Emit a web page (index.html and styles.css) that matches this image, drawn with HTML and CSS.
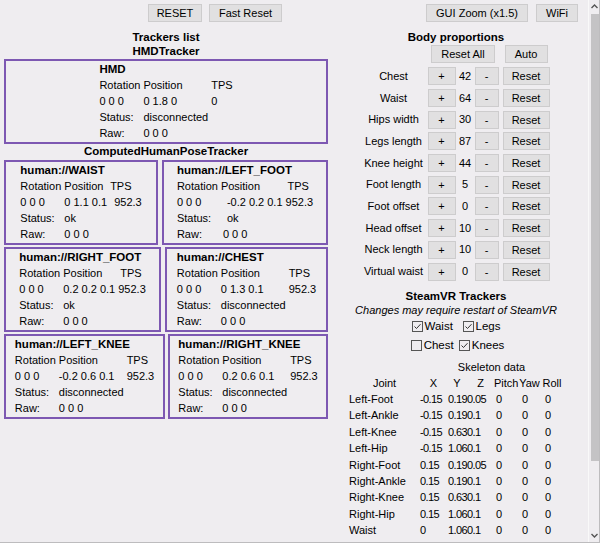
FILE: index.html
```html
<!DOCTYPE html>
<html lang="en">
<head>
<meta charset="utf-8">
<title>SlimeVR Server</title>
<link rel="stylesheet" href="styles.css">
</head>
<body>
<div class="app">
  <div class="content">
    <header class="topbar">
      <button class="btn btn-reset">RESET</button>
      <button class="btn btn-fast">Fast Reset</button>
      <button class="btn btn-zoom">GUI Zoom (x1.5)</button>
      <button class="btn btn-wifi">WiFi</button>
    </header>
    <div class="main">
      <section class="left">
        <h2 class="heading">Trackers list</h2>
        <h2 class="heading">HMDTracker</h2>
        <div class="tracker tracker-hmd">
          <div class="tgrid">
            <div class="ttitle">HMD</div>
            <span>Rotation</span><span>Position</span><span>TPS</span>
            <span>0 0 0</span><span>0 1.8 0</span><span>0</span>
            <span>Status:</span><span>disconnected</span><span></span>
            <span>Raw:</span><span>0 0 0</span><span></span>
          </div>
        </div>
        <h2 class="heading">ComputedHumanPoseTracker</h2>
        <div class="trow trow-a">
          <div class="tracker">
            <div class="tgrid">
              <div class="ttitle">human://WAIST</div>
              <span>Rotation</span><span>Position</span><span>TPS</span>
              <span>0 0 0</span><span>0 1.1 0.1</span><span class="tps">952.3</span>
              <span>Status:</span><span>ok</span><span></span>
              <span>Raw:</span><span>0 0 0</span><span></span>
            </div>
          </div>
          <div class="tracker">
            <div class="tgrid">
              <div class="ttitle">human://LEFT_FOOT</div>
              <span>Rotation</span><span>Position</span><span class="tps-h">TPS</span>
              <span>0 0 0</span><span class="shift">-0.2 0.2 0.1</span><span>952.3</span>
              <span>Status:</span><span class="shift">ok</span><span></span>
              <span>Raw:</span><span class="shift-s">0 0 0</span><span></span>
            </div>
          </div>
        </div>
        <div class="trow trow-b">
          <div class="tracker">
            <div class="tgrid">
              <div class="ttitle">human://RIGHT_FOOT</div>
              <span>Rotation</span><span>Position</span><span class="tps-h">TPS</span>
              <span>0 0 0</span><span>0.2 0.2 0.1</span><span>952.3</span>
              <span>Status:</span><span>ok</span><span></span>
              <span>Raw:</span><span>0 0 0</span><span></span>
            </div>
          </div>
          <div class="tracker">
            <div class="tgrid">
              <div class="ttitle">human://CHEST</div>
              <span>Rotation</span><span>Position</span><span>TPS</span>
              <span>0 0 0</span><span>0 1.3 0.1</span><span>952.3</span>
              <span>Status:</span><span>disconnected</span><span></span>
              <span>Raw:</span><span>0 0 0</span><span></span>
            </div>
          </div>
        </div>
        <div class="trow trow-c">
          <div class="tracker">
            <div class="tgrid">
              <div class="ttitle">human://LEFT_KNEE</div>
              <span>Rotation</span><span>Position</span><span>TPS</span>
              <span>0 0 0</span><span>-0.2 0.6 0.1</span><span>952.3</span>
              <span>Status:</span><span>disconnected</span><span></span>
              <span>Raw:</span><span>0 0 0</span><span></span>
            </div>
          </div>
          <div class="tracker">
            <div class="tgrid">
              <div class="ttitle">human://RIGHT_KNEE</div>
              <span>Rotation</span><span>Position</span><span>TPS</span>
              <span>0 0 0</span><span>0.2 0.6 0.1</span><span>952.3</span>
              <span>Status:</span><span>disconnected</span><span></span>
              <span>Raw:</span><span>0 0 0</span><span></span>
            </div>
          </div>
        </div>
      </section>

      <section class="right">
        <div class="props">
          <h2 class="heading props-title">Body proportions</h2>
          <button class="btn btn-resetall">Reset All</button>
          <button class="btn btn-auto">Auto</button>

          <span class="plabel">Chest</span><button class="btn btn-plus">+</button><span class="pval">42</span><button class="btn btn-minus">-</button><button class="btn btn-preset">Reset</button>
          <span class="plabel">Waist</span><button class="btn btn-plus">+</button><span class="pval">64</span><button class="btn btn-minus">-</button><button class="btn btn-preset">Reset</button>
          <span class="plabel">Hips width</span><button class="btn btn-plus">+</button><span class="pval">30</span><button class="btn btn-minus">-</button><button class="btn btn-preset">Reset</button>
          <span class="plabel">Legs length</span><button class="btn btn-plus">+</button><span class="pval">87</span><button class="btn btn-minus">-</button><button class="btn btn-preset">Reset</button>
          <span class="plabel">Knee height</span><button class="btn btn-plus">+</button><span class="pval">44</span><button class="btn btn-minus">-</button><button class="btn btn-preset">Reset</button>
          <span class="plabel">Foot length</span><button class="btn btn-plus">+</button><span class="pval">5</span><button class="btn btn-minus">-</button><button class="btn btn-preset">Reset</button>
          <span class="plabel">Foot offset</span><button class="btn btn-plus">+</button><span class="pval">0</span><button class="btn btn-minus">-</button><button class="btn btn-preset">Reset</button>
          <span class="plabel">Head offset</span><button class="btn btn-plus">+</button><span class="pval">10</span><button class="btn btn-minus">-</button><button class="btn btn-preset">Reset</button>
          <span class="plabel">Neck length</span><button class="btn btn-plus">+</button><span class="pval">10</span><button class="btn btn-minus">-</button><button class="btn btn-preset">Reset</button>
          <span class="plabel">Virtual waist</span><button class="btn btn-plus">+</button><span class="pval">0</span><button class="btn btn-minus">-</button><button class="btn btn-preset">Reset</button>
        </div>

        <h2 class="heading steam-title">SteamVR Trackers</h2>
        <p class="note">Changes may require restart of SteamVR</p>
        <div class="checks">
          <label class="check"><svg class="cb" width="11" height="11" viewBox="0 0 11 11"><rect x="0.5" y="0.5" width="10" height="10" fill="none" stroke="#555"/><path d="M2.5 5.5 L4.5 7.5 L8.5 3.2" fill="none" stroke="#333" stroke-width="1"/></svg>Waist</label>
          <label class="check"><svg class="cb" width="11" height="11" viewBox="0 0 11 11"><rect x="0.5" y="0.5" width="10" height="10" fill="none" stroke="#555"/><path d="M2.5 5.5 L4.5 7.5 L8.5 3.2" fill="none" stroke="#333" stroke-width="1"/></svg>Legs</label>
          <label class="check"><svg class="cb" width="11" height="11" viewBox="0 0 11 11"><rect x="0.5" y="0.5" width="10" height="10" fill="none" stroke="#555"/></svg>Chest</label>
          <label class="check"><svg class="cb" width="11" height="11" viewBox="0 0 11 11"><rect x="0.5" y="0.5" width="10" height="10" fill="none" stroke="#555"/><path d="M2.5 5.5 L4.5 7.5 L8.5 3.2" fill="none" stroke="#333" stroke-width="1"/></svg>Knees</label>
        </div>

        <div class="skeleton">
          <div class="sk-title">Skeleton data</div>
          <span class="sh">Joint</span><span class="sh">X</span><span class="sh">Y</span><span class="sh">Z</span><span class="sh">Pitch</span><span class="sh">Yaw</span><span class="sh">Roll</span>

          <span>Left-Foot</span><span class="n">-0.15</span><span class="n ny">0.19</span><span class="n">0.05</span><span class="n np">0</span><span class="n nr">0</span><span class="n nr">0</span>
          <span>Left-Ankle</span><span class="n">-0.15</span><span class="n ny">0.19</span><span class="n">0.1</span><span class="n np">0</span><span class="n nr">0</span><span class="n nr">0</span>
          <span>Left-Knee</span><span class="n">-0.15</span><span class="n ny">0.63</span><span class="n">0.1</span><span class="n np">0</span><span class="n nr">0</span><span class="n nr">0</span>
          <span>Left-Hip</span><span class="n">-0.15</span><span class="n ny">1.06</span><span class="n">0.1</span><span class="n np">0</span><span class="n nr">0</span><span class="n nr">0</span>
          <span>Right-Foot</span><span class="n">0.15</span><span class="n ny">0.19</span><span class="n">0.05</span><span class="n np">0</span><span class="n nr">0</span><span class="n nr">0</span>
          <span>Right-Ankle</span><span class="n">0.15</span><span class="n ny">0.19</span><span class="n">0.1</span><span class="n np">0</span><span class="n nr">0</span><span class="n nr">0</span>
          <span>Right-Knee</span><span class="n">0.15</span><span class="n ny">0.63</span><span class="n">0.1</span><span class="n np">0</span><span class="n nr">0</span><span class="n nr">0</span>
          <span>Right-Hip</span><span class="n">0.15</span><span class="n ny">1.06</span><span class="n">0.1</span><span class="n np">0</span><span class="n nr">0</span><span class="n nr">0</span>
          <span>Waist</span><span class="n">0</span><span class="n ny">1.06</span><span class="n">0.1</span><span class="n np">0</span><span class="n nr">0</span><span class="n nr">0</span>
        </div>
      </section>
    </div>
  </div>

  <div class="scrollbar">
    <svg class="arrow" width="11" height="12" viewBox="0 0 11 12"><path d="M2.5 8 L5.5 5 L8.5 8" fill="none" stroke="#555" stroke-width="1.4"/></svg>
    <div class="thumb"></div>
    <div class="track-rest"></div>
    <svg class="arrow" width="11" height="12" viewBox="0 0 11 12"><path d="M2.5 4 L5.5 7 L8.5 4" fill="none" stroke="#555" stroke-width="1.4"/></svg>
  </div>
</div>
</body>
</html>
```

FILE: styles.css
```css
html, body {
  margin: 0;
  padding: 0;
}

body {
  background: #efedf0;
  font-family: "Liberation Sans", Arial, sans-serif;
  font-size: 11px;
  line-height: 1;
  color: #000;
}

.app {
  display: flex;
  width: 600px;
  height: 543px;
  box-sizing: border-box;
  border-right: 1px solid #bdbcbe;
  border-bottom: 1px solid #bdbcbe;
  overflow: hidden;
}

.content {
  flex: none;
  width: 588px;
}

/* ---------- buttons ---------- */
.btn {
  font-family: inherit;
  font-size: 11px;
  color: #000;
  height: 18px;
  padding: 0;
  margin: 0;
  background: #e1e0e1;
  border: 1px solid #cdcccd;
  border-radius: 0;
  box-sizing: border-box;
  line-height: 16px;
  text-align: center;
}

/* ---------- top bar ---------- */
.topbar {
  display: flex;
  align-items: flex-start;
  height: 30px;
  box-sizing: border-box;
  padding: 4px 0 0 148px;
}

.btn-reset { width: 54px; }
.btn-fast { width: 73px; margin-left: 7px; }
.btn-zoom { width: 102px; margin-left: 144px; }
.btn-wifi { width: 42px; margin-left: 8px; }

/* ---------- layout ---------- */
.main {
  display: flex;
  align-items: flex-start;
}

.left {
  flex: none;
  width: 324px;
  margin-left: 4px;
}

.right {
  flex: none;
  width: 256px;
}

.heading {
  margin: 0;
  font-size: 11.5px;
  font-weight: bold;
  line-height: 14px;
  text-align: center;
}

/* ---------- trackers ---------- */
.tracker {
  display: flex;
  justify-content: center;
  border: 2px solid #7d58b2;
  padding-bottom: 1px;
  line-height: 16px;
}

.tracker-hmd {
  margin-top: 1px;
}

.tgrid {
  display: grid;
  grid-template-columns: auto auto auto;
  column-gap: 3px;
  justify-content: start;
  white-space: nowrap;
}

.ttitle {
  grid-column: 1 / -1;
  font-weight: bold;
  font-size: 11.5px;
}

.tps { padding-left: 4px; }
.shift { padding-left: 6px; }
.shift-s { padding-left: 2px; }
.tps-h { padding-left: 2px; }

.trow {
  display: grid;
  margin-top: 2px;
}

.trow-a { grid-template-columns: 154px 166px; column-gap: 4px; }
.trow-b { grid-template-columns: 157px 163px; column-gap: 4px; }
.trow-c { grid-template-columns: 161px 160px; column-gap: 3px; }

/* ---------- body proportions ---------- */
.props {
  display: grid;
  grid-template-columns: 65px 28px 19px 24px 51px;
  grid-template-rows: 15px 20.5px;
  grid-auto-rows: 21.7px;
  justify-content: center;
  align-items: center;
}

.props-title {
  grid-column: 1 / -1;
  align-self: start;
}

.btn-resetall {
  grid-column: 2 / 5;
  justify-self: center;
  align-self: start;
  width: 64px;
}

.btn-auto {
  grid-column: 5;
  justify-self: end;
  align-self: start;
  width: 43px;
  margin-right: 2px;
}

.plabel {
  text-align: center;
  padding-right: 3px;
  white-space: nowrap;
}

.btn-plus { width: 28px; }
.pval { text-align: center; }
.btn-minus { width: 24px; }
.btn-preset { width: 47px; justify-self: end; }

/* ---------- steamvr ---------- */
.steam-title {
  margin-top: 6.5px;
}

.note {
  margin: 0;
  font-style: italic;
  line-height: 14px;
  text-align: center;
  white-space: nowrap;
}

.checks {
  display: grid;
  grid-template-columns: auto auto;
  grid-auto-rows: 19px;
  column-gap: 5px;
  justify-content: center;
  justify-items: center;
  align-items: center;
  padding-left: 3px;
}

.check {
  display: flex;
  align-items: center;
  gap: 2px;
  font-size: 11.5px;
}

.cb {
  display: block;
}

/* ---------- skeleton ---------- */
.skeleton {
  display: grid;
  grid-template-columns: 71px 27px 20px 27px 24px 23px 22px;
  grid-template-rows: 14px;
  grid-auto-rows: 16.4px;
  justify-content: center;
  align-items: center;
  margin-top: 6px;
  white-space: nowrap;
}

.sk-title {
  grid-column: 2 / -1;
  text-align: center;
}

.sh {
  text-align: center;
}

.n { letter-spacing: -0.6px; }
.ny { padding-left: 1px; }
.np { padding-left: 2px; }
.nr { padding-left: 4px; }

/* ---------- scrollbar ---------- */
.scrollbar {
  flex: none;
  width: 11px;
  display: flex;
  flex-direction: column;
  align-items: center;
  border-left: 1px solid #f9f9f9;
}

.arrow {
  display: block;
  flex: none;
}

.thumb {
  flex: none;
  width: 8px;
  height: 447px;
  margin-top: 2px;
  background: #c4c3c5;
}

.track-rest {
  flex: 1;
}
```
